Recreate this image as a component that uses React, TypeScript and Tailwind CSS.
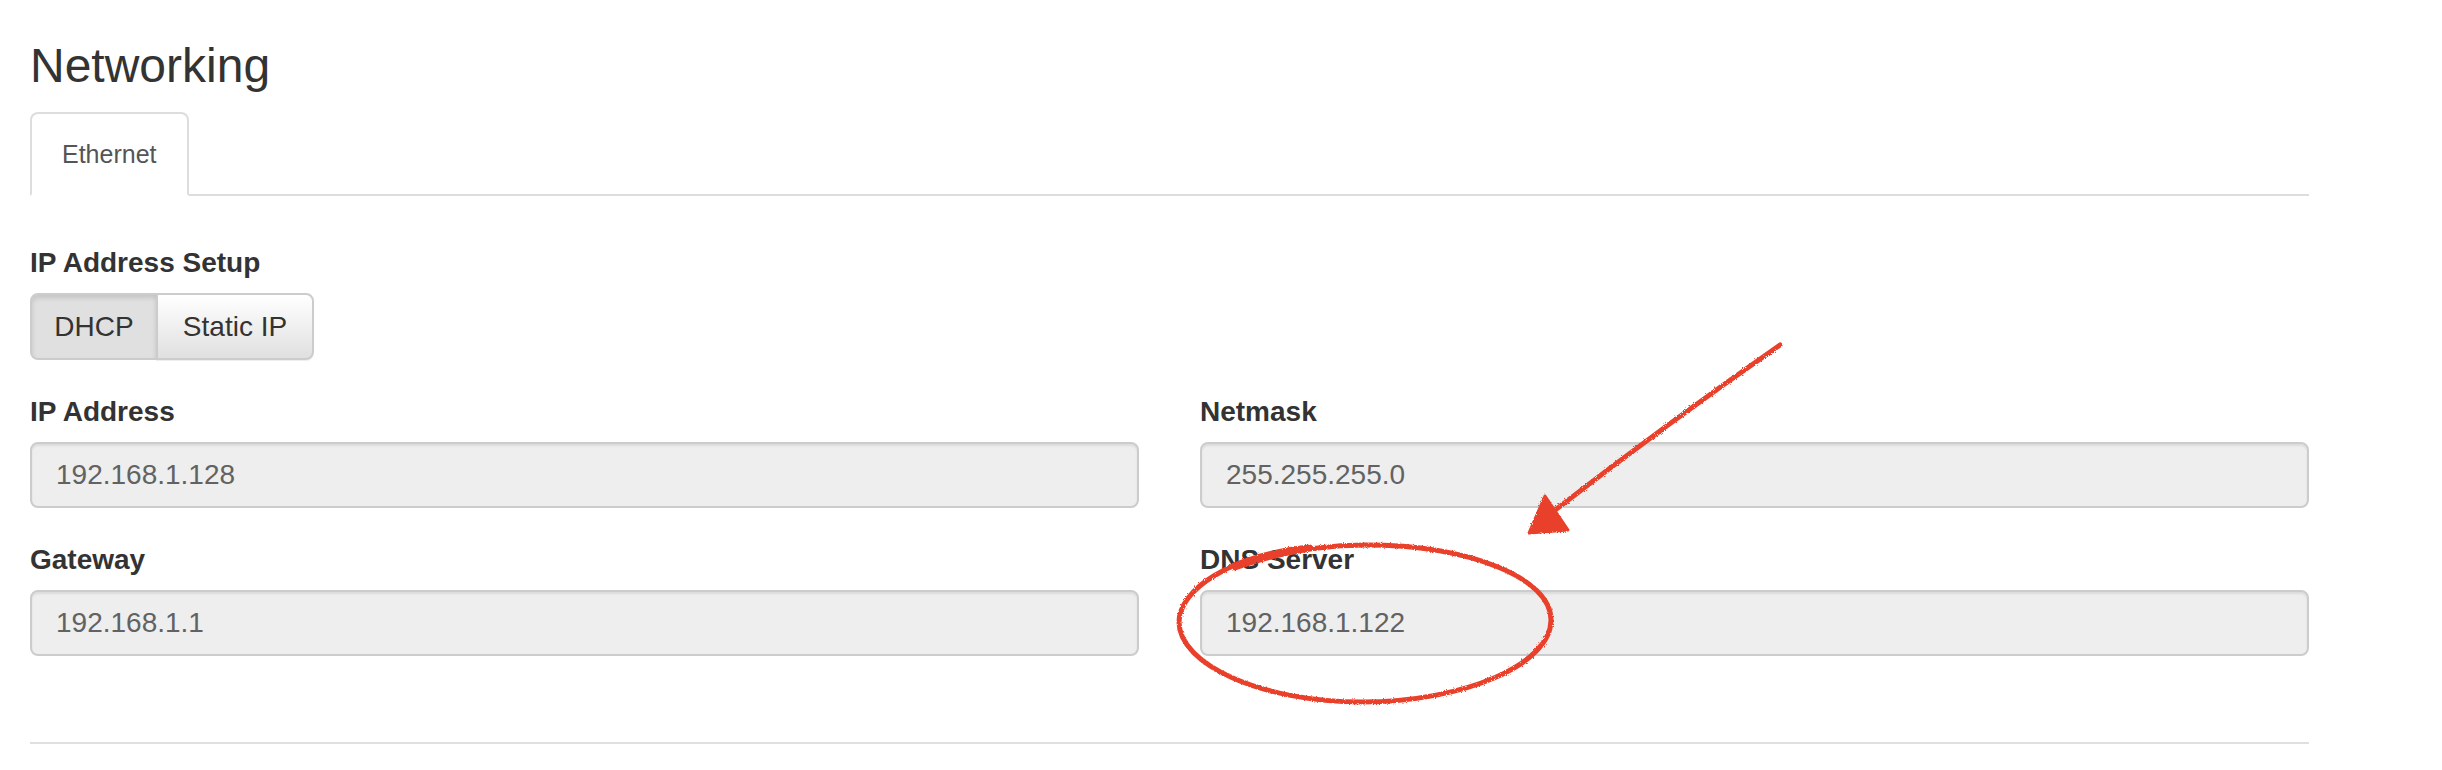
import React from 'react';

const fields = [
  { label: 'IP Address', value: '192.168.1.128' },
  { label: 'Netmask', value: '255.255.255.0' },
  { label: 'Gateway', value: '192.168.1.1' },
  { label: 'DNS Server', value: '192.168.1.122' },
];

function Field({ label, value }: { label: string; value: string }) {
  return (
    <div className="flex flex-col">
      <label className="mb-[10px] text-[28px] leading-[40px] font-bold text-[#333]">{label}</label>
      <input
        readOnly
        value={value}
        className="h-[66px] w-full rounded-[8px] border-2 border-[#ccc] bg-[#eee] px-[24px] text-[28px] text-[#626262] shadow-[inset_0_2px_2px_rgba(0,0,0,0.075)] outline-none"
      />
    </div>
  );
}

export default function App() {
  return (
    <div className="relative h-[770px] w-[2442px] overflow-hidden bg-white pt-[40px] pl-[30px] font-['Liberation_Sans',Arial,sans-serif] text-[#333]">
      <div className="w-[2279px]">
        <h2 className="mb-[20px] text-[48px] leading-[52px] font-normal text-[#333]">Networking</h2>

        {/* tabs */}
        <ul className="flex border-b-2 border-[#ddd]">
          <li className="-mb-[2px]">
            <a className="block rounded-t-[8px] border-2 border-[#ddd] border-b-transparent bg-white px-[30px] py-[20px] text-[25px] leading-[40px] text-[#555]">
              Ethernet
            </a>
          </li>
        </ul>

        <div className="mt-[47px]">
          <div className="mb-[10px] text-[28px] leading-[40px] font-bold">IP Address Setup</div>
          <div className="flex">
            <button className="h-[67px] w-[128px] rounded-l-[8px] border-2 border-[#ccc] bg-[#e0e0e0] text-[28px] text-[#333] shadow-[inset_0_3px_5px_rgba(0,0,0,0.125)]">
              DHCP
            </button>
            <button className="-ml-[2px] h-[67px] w-[158px] rounded-r-[8px] border-2 border-[#ccc] bg-gradient-to-b from-white to-[#e0e0e0] text-[28px] text-[#333] shadow-[0_1px_1px_rgba(0,0,0,0.075)]">
              Static IP
            </button>
          </div>
        </div>

        <div className="mt-[32px] grid grid-cols-2 gap-x-[61px] gap-y-[32px]">
          {fields.map((f) => (
            <Field key={f.label} label={f.label} value={f.value} />
          ))}
        </div>

        <div className="mt-[86px] border-t-2 border-[#e0e0e0]" />
      </div>

      {/* red hand-drawn annotation */}
      <svg className="pointer-events-none absolute inset-0" width="2442" height="770" viewBox="0 0 2442 770">
        <defs>
          <filter id="rough" x="-10%" y="-10%" width="120%" height="120%">
            <feTurbulence type="fractalNoise" baseFrequency="0.9" numOctaves="2" result="n" />
            <feDisplacementMap in="SourceGraphic" in2="n" scale="3" />
          </filter>
        </defs>
        <g filter="url(#rough)" stroke="#e8412a" fill="none" strokeLinecap="round" strokeLinejoin="round">
          <path d="M1780 345 Q1665 425 1550 514" strokeWidth="5" />
          <polygon points="1545,496 1529,533 1568,530" fill="#e8412a" strokeWidth="3" />
          <path
            d="M1235 568 C1280 552 1320 545 1365 545 C1470 545 1551 578 1551 620 C1551 664 1465 702 1362 702 C1260 702 1179 664 1179 622 C1179 590 1230 555 1310 547"
            strokeWidth="5"
          />
        </g>
      </svg>
    </div>
  );
}
